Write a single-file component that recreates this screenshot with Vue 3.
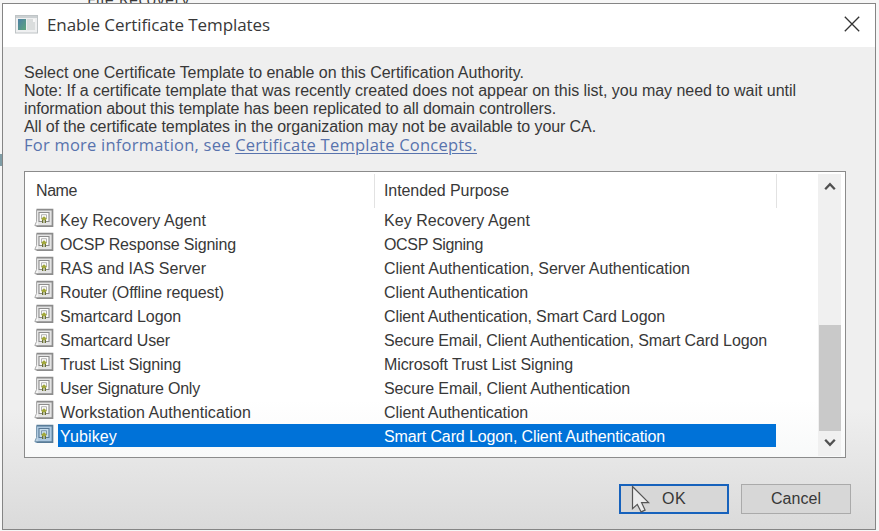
<script setup>
const rows = [
  ['Key Recovery Agent', 'Key Recovery Agent', 146, 146],
  ['OCSP Response Signing', 'OCSP Signing', 176, 99],
  ['RAS and IAS Server', 'Client Authentication, Server Authentication', 146, 306],
  ['Router (Offline request)', 'Client Authentication', 164, 144],
  ['Smartcard Logon', 'Client Authentication, Smart Card Logon', 121, 281],
  ['Smartcard User', 'Secure Email, Client Authentication, Smart Card Logon', 110, 383],
  ['Trust List Signing', 'Microsoft Trust List Signing', 121, 189],
  ['User Signature Only', 'Secure Email, Client Authentication', 140, 246],
  ['Workstation Authentication', 'Client Authentication', 191, 144],
  ['Yubikey', 'Smart Card Logon, Client Authentication', 57, 281],
]
const selected = 9

// Spreads each label over its measured width by adjusting the tracking.
const vFit = {
  mounted(el, { value }) {
    const spacing = (value - el.getBoundingClientRect().width) / el.textContent.length
    el.style.letterSpacing = `${spacing}px`
  },
}
</script>

<template>
  <div class="desktop">
    <div class="behind"><span v-fit="103">File Recovery</span></div>
    <div class="edge-mark"></div>
    <div class="dialog">
      <header class="titlebar">
        <svg class="app-icon" width="23" height="19" viewBox="0 0 23 19">
          <defs>
            <linearGradient id="screen" x1="0" y1="0" x2="1" y2="1">
              <stop offset="0" stop-color="#4c7fa6" />
              <stop offset="1" stop-color="#5fa67c" />
            </linearGradient>
          </defs>
          <rect x="0.5" y="0.5" width="22" height="17.5" fill="#eff0f1" stroke="#bfc4c6" />
          <rect x="1" y="1" width="21" height="2" fill="#cbd0d2" />
          <rect x="3" y="4" width="8" height="11" fill="url(#screen)" />
          <rect x="12" y="4" width="8" height="11" fill="#dadddd" />
          <path d="M18 4h2v3h-2z" fill="#f8f8f8" />
        </svg>
        <h1><span v-fit="223">Enable Certificate Templates</span></h1>
        <svg class="close" width="16" height="16" viewBox="0 0 16 16">
          <path d="M0.8 0.8 15.2 15.2M15.2 0.8 0.8 15.2" fill="none" stroke="#333" stroke-width="1.3" />
        </svg>
      </header>

      <main class="body">
        <div class="intro">
          <p><span v-fit="500">Select one Certificate Template to enable on this Certification Authority.</span></p>
          <p><span v-fit="772">Note: If a certificate template that was recently created does not appear on this list, you may need to wait until</span></p>
          <p><span v-fit="532">information about this template has been replicated to all domain controllers.</span></p>
          <p><span v-fit="572">All of the certificate templates in the organization may not be available to your CA.</span></p>
        </div>
        <p class="more"><span v-fit="453">For more information, see <a>Certificate Template Concepts.</a></span></p>

        <section class="list">
          <div class="table">
            <div class="head">
              <div class="col-name"><span v-fit="41">Name</span></div>
              <div class="col-purpose"><span v-fit="125">Intended Purpose</span></div>
            </div>
            <div v-for="(r, i) in rows" :key="r[0]" class="row" :class="{ selected: i === selected }">
              <svg class="cert" width="20" height="20" viewBox="0 0 20 20">
                <path class="paper" d="M2.5 1H19v18H1l1.5-5z" />
                <path class="shade" d="M2.5 1.6h16v16.6H2.5" />
                <path class="left" d="M2.5 2v11.5L.8 17.5h3.4" />
                <path class="frame" d="M8 13.5H5V4.500h10v9h-3" />
                <path class="inner" d="M7.500 11V6.700h5V11" />
                <path class="seal" d="M10 8.200l2.600 2.300-.6 1.800h-4l-.6-1.800z" />
                <path class="ribbon" d="M8.700 12v3M11.300 12v3" />
              </svg>
              <div class="cells">
                <div class="cell-name"><span v-fit="r[2]">{{ r[0] }}</span></div>
                <div class="cell-purpose"><span v-fit="r[3]">{{ r[1] }}</span></div>
              </div>
            </div>
          </div>
          <div class="scrollbar">
            <svg class="arrow" width="12" height="9" viewBox="0 0 12 9">
              <path d="M1.2 7.2 6 2.2l4.800 5" />
            </svg>
            <div class="thumb"></div>
            <svg class="arrow" width="12" height="9" viewBox="0 0 12 9">
              <path d="M1.2 1.8 6 6.8l4.800-5" />
            </svg>
          </div>
        </section>

        <footer class="actions">
          <button class="ok"><span v-fit="24">OK</span>
            <svg class="cursor" width="20" height="29" viewBox="0 0 20 29">
              <path d="M1.5 1.5v22.2l4.800-4.300 3.800 7.500 4-1.800-3.500-7.400h7z" fill="#ececec" stroke="#555" stroke-width="1.2" />
            </svg>
          </button>
          <button><span v-fit="50">Cancel</span></button>
        </footer>
      </main>
    </div>
  </div>
</template>

<style>
body { margin: 0; overflow: hidden; }
</style>

<style scoped>
* { box-sizing: border-box; }
.desktop {
  position: relative;
  width: 879px;
  height: 531px;
  padding: 3px 0 0 2px;
  overflow: hidden;
  background: #f6f6f6;
  font-family: "Liberation Sans", Arial, sans-serif;
  font-size: 16px;
  color: #383838;
}
span { display: inline-block; white-space: pre; }
.behind { position: absolute; left: 87px; top: -10px; font: 16px/19px "Open Sans", sans-serif; }
.edge-mark { position: absolute; left: 0; top: 154px; width: 2px; height: 12px; background: #7f9da6; }
.dialog {
  position: relative;
  display: flex;
  flex-direction: column;
  width: 874px;
  height: 527px;
  border: 1.5px solid #858585;
  background: #efefef;
}
.titlebar {
  display: flex;
  align-items: center;
  flex: 0 0 43px;
  padding: 0 15px 0 12px;
  background: #fff;
}
.app-icon { margin-top: -2px; }
h1 {
  flex: 1;
  margin: -2px 0 0 9px;
  font: 400 17px/24px "Open Sans", sans-serif;
}
.close { margin-top: -3px; }
.body {
  flex: 1;
  padding: 16px 30px 0 21px;
  background: linear-gradient(#efefef 0 75%, #dadada 100%);
}
p { margin: 0; }
.intro p { height: 18px; line-height: 19px; }
.intro p:nth-child(n + 3) { line-height: 20px; }
.more { height: 21px; line-height: 20px; font-family: "Open Sans", sans-serif; font-size: 16.5px; color: #5873ad; }
.more a { text-decoration: underline; text-underline-offset: 2px; }
.list {
  display: flex;
  justify-content: space-between;
  width: 822px;
  height: 287px;
  margin-top: 15px;
  padding: 2px 4px 1px 9px;
  border: 1px solid #8b8b8b;
  background: linear-gradient(#fff 80%, #f8f9f9);
}
.head { display: flex; height: 34px; line-height: 34px; }
.col-name { width: 341px; padding-left: 2px; border-right: 1px solid #e2e2e2; }
.col-purpose { width: 402px; padding-left: 9px; border-right: 1px solid #e2e2e2; }
.row { display: flex; height: 24px; }
.cells { display: flex; width: 718px; height: 23px; margin: 0 0 0 4px; line-height: 25px; }
.cell-name { width: 326px; padding-left: 2px; }
.selected .cells { background: #0072d8; color: #fff; }
.paper { fill: #e4e4e4; }
.shade { fill: none; stroke: #8c8c8c; stroke-width: 1.7; }
.left { fill: #f6f6f6; stroke: #aaa; }
.frame { fill: #fcfcfc; stroke: #8d8d8d; stroke-width: 1.1; }
.inner { fill: none; stroke: #aaa; stroke-width: 0.9; }
.seal { fill: #a2a83c; }
.ribbon { stroke: #646b2c; stroke-width: 1.300; }
.selected .paper { fill: #abc7df; }
.selected .shade { stroke: #597c98; }
.selected .frame { fill: #c7ddeb; stroke: #587895; }
.selected .inner { stroke: #7590a8; }
.selected .left { fill: #bdd3e4; stroke: #7b9ab1; }
.scrollbar {
  display: flex;
  flex-direction: column;
  align-items: center;
  width: 23px;
  padding: 8px 0 9px;
  background: #f0f0f0;
}
.arrow path { fill: none; stroke: #505050; stroke-width: 2.3; }
.thumb { width: 22px; height: 106px; margin: auto 0 7px; background: #c9c9c9; }
.actions { display: flex; justify-content: flex-end; gap: 12px; margin: 26px -6px 0 0; }
button {
  position: relative;
  width: 110px;
  height: 30px;
  padding: 0;
  border: 1px solid #aaa;
  background: #d7d7d7;
  color: #383838;
  font: 16px "Liberation Sans", Arial, sans-serif;
}
.ok { border: 2px solid #1762bc; }
.cursor { position: absolute; left: 10px; top: -1px; }
</style>
